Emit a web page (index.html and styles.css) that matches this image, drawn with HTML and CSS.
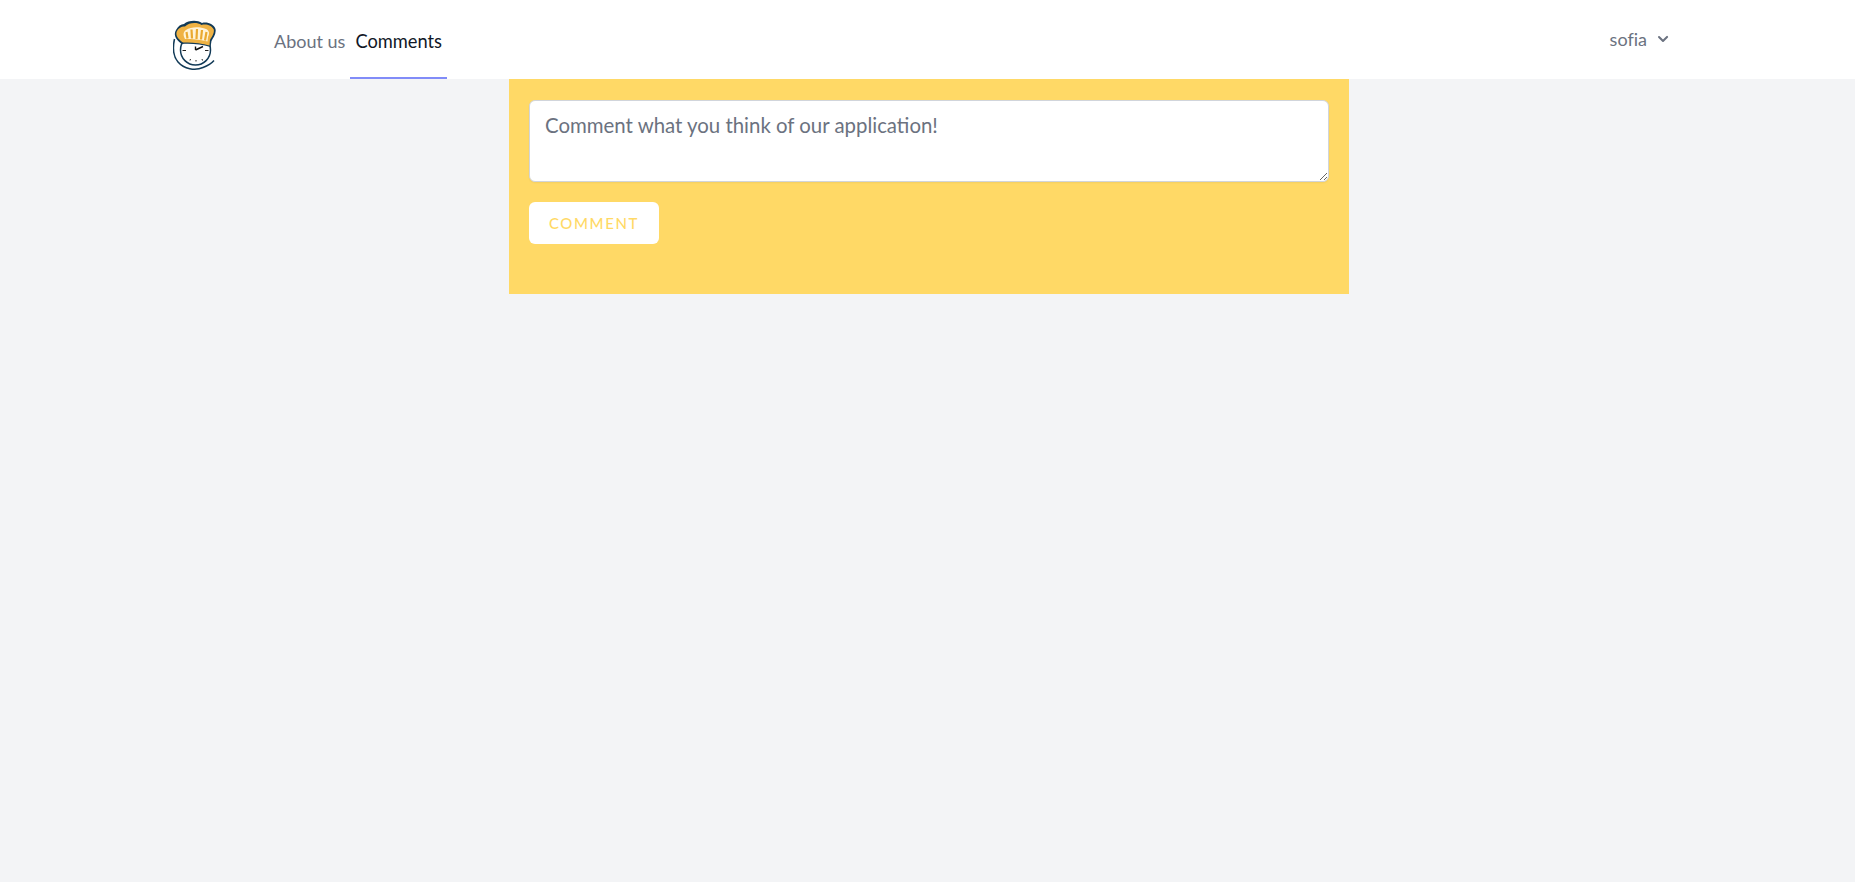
FILE: index.html
```html
<!DOCTYPE html>
<html lang="en">
<head>
<meta charset="utf-8">
<title>Comments</title>
<link rel="stylesheet" href="styles.css">
</head>
<body>
<header class="topbar">
  <a class="logo" href="#" aria-label="Home">
    <svg width="44" height="50" viewBox="0 0 44 50">
      <path d="M1.5 19 C-0.5 28 0 36 5 42 C11 49 22 51 30 47.5 C34 46 38 44 41 40.5" fill="none" stroke="#123a57" stroke-width="1.5"/>
      <circle cx="22.5" cy="30" r="15" fill="#fff" stroke="#123a57" stroke-width="1.5"/>
      <path d="M9 24 C3 20 0 15 3 10 C5 6 8 4 11 4 C15 0.5 24 -0.5 29 3 C34 1.5 41 4 42.5 9 C43.5 14 40 18 38.5 21 L37.5 27 C28 24 18 23.5 9 24 Z" fill="#123a57"/>
      <path d="M10 22.5 C5 19 2 15 4 11 C6 7.5 9 6 12 6.5 C16 2.5 24 2 28.5 5 C33 3.5 39 5.5 40.8 9.5 C41.5 13.5 38.5 17 37 20 L36.5 25.5 C28 23 18 22 10 22.5 Z" fill="#efb243"/>
      <path d="M12 19 C10 15 10 12 13 10 C18 6.5 27 6.5 33 9 C36 10.5 37 13 35 17 L34.5 21.5 C27 19.5 19 19 12 19 Z" fill="#fff3d6"/>
      <path d="M14.5 18.5 L13.5 12 M19 18.5 L18.5 9.5 M23.5 19 L24 9 M28 19.5 L29 10 M32 20.5 L33.5 12" stroke="#eaa92f" stroke-width="2.2" fill="none"/>
      <path d="M22.5 30 L22.5 26.5 M22.5 30 L30 26.5" stroke="#111" stroke-width="1.4" fill="none"/>
      <path d="M9.5 30.5 H13 M32 30.5 H35.5 M17.5 39 L17 40.5 M23 40 V41.5 M29 39 L29.5 40.5" stroke="#222" stroke-width="1" fill="none"/>
    </svg>
  </a>
  <nav class="nav">
    <a class="nav-link" href="#">About us</a>
    <a class="nav-link active" href="#">Comments</a>
  </nav>
  <button class="user" type="button">
    <span>sofia</span>
    <svg width="20" height="20" viewBox="0 0 20 20" fill="#6b7280"><path fill-rule="evenodd" d="M5.3 7.3a1 1 0 0 1 1.4 0L10 10.6l3.3-3.3a1 1 0 1 1 1.4 1.4l-4 4a1 1 0 0 1-1.4 0l-4-4a1 1 0 0 1 0-1.4z"/></svg>
  </button>
</header>
<main class="main">
  <section class="panel">
    <textarea class="comment-box" placeholder="Comment what you think of our application!"></textarea>
    <button class="comment-btn" type="button">COMMENT</button>
  </section>
</main>
</body>
</html>
```
FILE: styles.css
```css
* { box-sizing: border-box; }
html, body { margin: 0; height: 100%; }
body {
  background: #f3f4f6;
  font-family: "Lato", "Liberation Sans", sans-serif;
  font-variant-ligatures: none;
  color: #111827;
}
.topbar {
  height: 79px;
  background: #fff;
  display: flex;
  align-items: stretch;
  padding: 0 182px 0 173px;
}
.logo { display: flex; align-items: flex-start; width: 96px; padding-top: 20px; }
.nav { display: flex; flex: 1; }
.nav-link {
  display: flex;
  align-items: center;
  padding: 4px 5px 0;
  font-size: 18px;
  color: #6b7280;
  text-decoration: none;
  border-bottom: 2px solid transparent;
}
.nav-link.active { font-size: 18.3px; color: #111827; border-bottom-color: #818cf8; }
.user {
  display: flex;
  align-items: center;
  gap: 6px;
  height: 77px;
  padding: 0;
  border: 0;
  background: none;
  font: inherit;
  font-size: 18px;
  color: #6b7280;
}
.main { display: flex; justify-content: center; padding-left: 3px; }
.panel {
  width: 840px;
  height: 215px;
  background: #ffd966;
  padding: 21px 20px;
  display: flex;
  flex-direction: column;
  align-items: flex-start;
}
.comment-box {
  display: block;
  width: 800px;
  height: 82px;
  padding: 12px 15px;
  border: 1px solid #d1d5db;
  border-radius: 6px;
  background: #fff;
  font-family: inherit;
  font-size: 20.4px;
  line-height: 24px;
  color: #111827;
  outline: 0;
  box-shadow: 0 1px 2px rgba(0, 0, 0, .05);
}
.comment-box::placeholder { color: #6b7280; opacity: 1; }
.comment-btn {
  margin-top: 20px;
  width: 130px;
  height: 42px;
  padding: 0;
  border: 0;
  border-radius: 6px;
  background: #fff;
  color: #ffd966;
  font-family: inherit;
  font-size: 15px;
  font-weight: 500;
  letter-spacing: 1.6px;
}
```
